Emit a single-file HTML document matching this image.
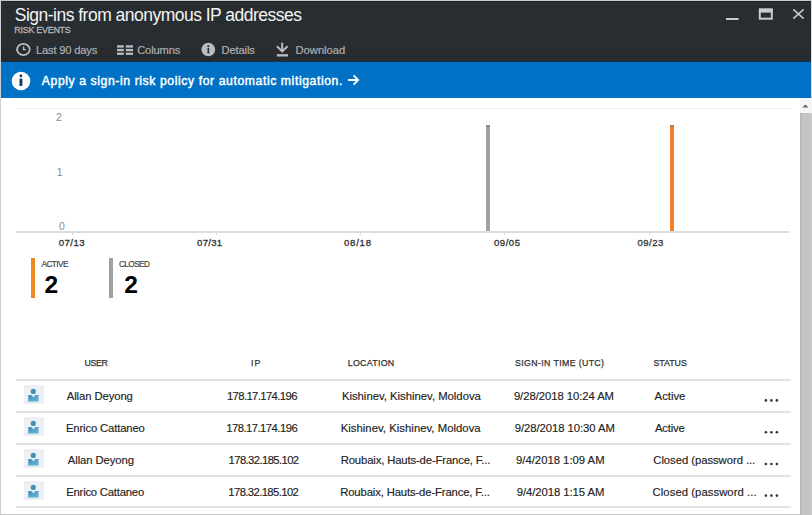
<!DOCTYPE html>
<html><head><meta charset="utf-8">
<style>
*{margin:0;padding:0;box-sizing:border-box}
html,body{width:812px;height:515px;overflow:hidden;background:#fff}
body{position:relative;font-family:"Liberation Sans",sans-serif;line-height:1}
.a{position:absolute;white-space:nowrap;line-height:1}
.s{position:absolute}
#frame{position:absolute;left:0;top:0;width:800px;height:515px;border-left:1px solid #cfcfcf;border-top:1px solid #c4c9cd;border-bottom:1.5px solid #c6c6c6}
.rl{position:absolute;left:16px;width:775px;height:2px;background:#e3e3e3}
.ui{position:absolute;left:24px;width:20px;height:19px;background:#eceff1}
.dot{position:absolute;width:3px;height:3px;border-radius:50%;background:#333}
</style></head><body>
<div class="s" style="left:0;top:0;width:812px;height:61px;background:#282d31"></div>
<div class="s" style="left:0;top:1px;width:812px;height:1px;background:#1f2427"></div>
<div class="s" style="left:0;top:4px;width:812px;height:1px;background:#2d3236"></div>
<div class="s" style="left:0;top:47px;width:812px;height:3px;background:#242c36"></div>
<div class="s" style="left:0;top:50px;width:812px;height:3.5px;background:#2d2a28"></div>
<div class="s" style="left:0;top:53.5px;width:812px;height:4px;background:#222c37"></div>
<div class="s" style="left:0;top:57.5px;width:812px;height:3px;background:#2a2a2b"></div>
<div class="s" style="left:0;top:60.5px;width:812px;height:1.5px;background:#0d3153"></div>
<div class="s" style="left:0;top:62px;width:812px;height:36px;background:#0072c6"></div>
<svg class="s" style="left:0;top:0" width="812" height="98" viewBox="0 0 812 98">
 <!-- window buttons -->
 <rect x="726" y="18" width="12.5" height="2" fill="#c9cbcd"/>
 <rect x="759.8" y="9.3" width="12" height="9.4" fill="none" stroke="#c9cbcd" stroke-width="2"/>
 <rect x="759" y="9" width="13.6" height="3.6" fill="#c9cbcd"/>
 <path d="M793.3 9.3 L803.6 18.6 M803.6 9.3 L793.3 18.6" stroke="#c2c4c7" stroke-width="1.7" fill="none"/>
 <!-- toolbar icons -->
 <ellipse cx="23.4" cy="49.45" rx="6.3" ry="5.6" stroke="#babdc0" stroke-width="1.7" fill="none"/>
 <path d="M23.6 46.4 V49.6 H25.8" stroke="#babdc0" stroke-width="1.4" fill="none"/>
 <path d="M15.8 49.2 L18.6 49.2 L17 51.2 Z" fill="#babdc0"/>
 <g fill="#babdc0">
  <rect x="117" y="45.3" width="6.8" height="2.3"/><rect x="117" y="48.9" width="6.8" height="2.3"/><rect x="117" y="52.6" width="6.8" height="2.3"/>
  <rect x="125.8" y="45.3" width="7.2" height="2.3"/><rect x="125.8" y="48.9" width="7.2" height="2.3"/><rect x="125.8" y="52.6" width="7.2" height="2.3"/>
 </g>
 <circle cx="208.3" cy="49.5" r="6.8" fill="#babdc0"/>
 <circle cx="208.3" cy="46.1" r="1.1" fill="#292e32"/>
 <rect x="207.5" y="47.9" width="1.7" height="5.6" fill="#292e32"/>
 <g stroke="#babdc0" fill="none" stroke-width="2">
  <path d="M282.2 42.7 V51"/>
  <path d="M276.9 46.3 L282.2 51.4 L287.6 46.3"/>
 </g>
 <rect x="276.8" y="54.2" width="11.2" height="2.3" fill="#babdc0"/>
 <!-- banner info -->
 <circle cx="21" cy="81" r="9.3" fill="#ffffff"/>
 <circle cx="20.9" cy="75.9" r="1.4" fill="#15385a"/>
 <rect x="19.5" y="78.6" width="2.9" height="7.3" fill="#15385a"/>
 <!-- arrow -->
 <path d="M348 80 H358 M353.6 75.4 L358.2 80 L353.6 84.6" stroke="#ffffff" stroke-width="1.8" fill="none"/>
</svg>
<!-- chart -->
<div class="s" style="left:16px;top:108px;width:775px;height:1px;background:#f8eee6"></div>
<div class="s" style="left:16px;top:231px;width:773px;height:2px;background:#dcdcdc"></div>
<div class="s" style="left:486px;top:124.5px;width:4px;height:106.5px;background:#a2a2a2"></div><div class="s" style="left:486px;top:124.5px;width:4px;height:2px;background:#8c8c8c"></div>
<div class="s" style="left:670px;top:124.5px;width:4px;height:106.5px;background:#f37f26"></div><div class="s" style="left:670px;top:124.5px;width:4px;height:2px;background:#d27240"></div>
<div class="s" style="left:72px;top:233px;width:1px;height:2px;background:#d6d6d6"></div><div class="s" style="left:216px;top:233px;width:1px;height:2px;background:#d6d6d6"></div><div class="s" style="left:360px;top:233px;width:1px;height:2px;background:#d6d6d6"></div><div class="s" style="left:504px;top:233px;width:1px;height:2px;background:#d6d6d6"></div><div class="s" style="left:649px;top:233px;width:1px;height:2px;background:#d6d6d6"></div>
<!-- legend -->
<div class="s" style="left:31px;top:258px;width:4px;height:40px;background:#f08c1e"></div>
<div class="s" style="left:109px;top:258px;width:4px;height:40px;background:#a0a0a0"></div>
<!-- table lines -->
<div class="rl" style="top:379px"></div>
<div class="rl" style="top:411px"></div>
<div class="rl" style="top:443px"></div>
<div class="rl" style="top:475px"></div>
<div class="rl" style="top:506px"></div>
<svg class="s" style="left:0;top:370px" width="812" height="145" viewBox="0 370 812 145">
 <defs><linearGradient id="ug" x1="0" y1="0" x2="1" y2="1"><stop offset="0" stop-color="#3f88b3"/><stop offset="1" stop-color="#6cc0e0"/></linearGradient></defs>
 <g transform="translate(0 385)">
   <rect x="24" y="0" width="20" height="19" fill="#ecf0f2"/>
   <circle cx="33.3" cy="6.4" r="2.6" fill="#4a8fb8"/>
   <path d="M28.3 10 H38.6 V16.6 H28.3 Z" fill="url(#ug)"/>
   <path d="M31.3 10 L33.4 12.4 L35.5 10 Z" fill="#cfe8f3"/>
 </g>
 <g transform="translate(0 417)">
   <rect x="24" y="0" width="20" height="19" fill="#ecf0f2"/>
   <circle cx="33.3" cy="6.4" r="2.6" fill="#4a8fb8"/>
   <path d="M28.3 10 H38.6 V16.6 H28.3 Z" fill="url(#ug)"/>
   <path d="M31.3 10 L33.4 12.4 L35.5 10 Z" fill="#cfe8f3"/>
 </g>
 <g transform="translate(0 449)">
   <rect x="24" y="0" width="20" height="19" fill="#ecf0f2"/>
   <circle cx="33.3" cy="6.4" r="2.6" fill="#4a8fb8"/>
   <path d="M28.3 10 H38.6 V16.6 H28.3 Z" fill="url(#ug)"/>
   <path d="M31.3 10 L33.4 12.4 L35.5 10 Z" fill="#cfe8f3"/>
 </g>
 <g transform="translate(0 481)">
   <rect x="24" y="0" width="20" height="19" fill="#ecf0f2"/>
   <circle cx="33.3" cy="6.4" r="2.6" fill="#4a8fb8"/>
   <path d="M28.3 10 H38.6 V16.6 H28.3 Z" fill="url(#ug)"/>
   <path d="M31.3 10 L33.4 12.4 L35.5 10 Z" fill="#cfe8f3"/>
 </g>
 <g fill="#333"><circle cx="765.9" cy="400.4" r="1.3"/><circle cx="771.4" cy="400.4" r="1.3"/><circle cx="776.9" cy="400.4" r="1.3"/></g>
 <g fill="#333"><circle cx="765.9" cy="432.2" r="1.3"/><circle cx="771.4" cy="432.2" r="1.3"/><circle cx="776.9" cy="432.2" r="1.3"/></g>
 <g fill="#333"><circle cx="765.9" cy="464" r="1.3"/><circle cx="771.4" cy="464" r="1.3"/><circle cx="776.9" cy="464" r="1.3"/></g>
 <g fill="#333"><circle cx="765.9" cy="495.6" r="1.3"/><circle cx="771.4" cy="495.6" r="1.3"/><circle cx="776.9" cy="495.6" r="1.3"/></g>
</svg>
<!-- scrollbar -->
<div class="s" style="left:800px;top:98px;width:12px;height:15px;background:#f6f6f6"></div>
<svg class="s" style="left:800px;top:98px" width="12" height="15"><path d="M2.2 9.6 L5.4 6.5 L8.6 9.6 Z" fill="#666"/></svg>
<div class="s" style="left:799.5px;top:113px;width:12.5px;height:402px;background:#c4c4c4"></div>
<div class="s" style="left:799.5px;top:113px;width:2px;height:402px;background:#b9b9b9"></div>
<div class="s" style="left:809.5px;top:113px;width:2.5px;height:402px;background:#cacaca"></div>
<div class="s" style="left:811px;top:0;width:1px;height:98px;background:#dcdfe2"></div>
<div class="s" style="left:800px;top:0;width:12px;height:1px;background:#c4c9cd"></div>

<div class="a" id="title" style="left:14.80px;top:7.09px;font-size:17.5px;color:#f4f4f4;letter-spacing:-0.514px;">Sign-ins from anonymous IP addresses</div>
<div class="a" id="risk" style="left:14.30px;top:26.18px;font-size:9px;color:#b2b4b6;letter-spacing:-0.300px;-webkit-text-stroke:0.3px #b2b4b6;">RISK EVENTS</div>
<div class="a" id="tb1" style="left:35.90px;top:45.42px;font-size:11.2px;color:#adafb1;letter-spacing:-0.182px;-webkit-text-stroke:0.2px #adafb1;">Last 90 days</div>
<div class="a" id="tb2" style="left:137.20px;top:45.42px;font-size:11.2px;color:#adafb1;letter-spacing:-0.167px;-webkit-text-stroke:0.2px #adafb1;">Columns</div>
<div class="a" id="tb3" style="left:221.60px;top:45.42px;font-size:11.2px;color:#adafb1;letter-spacing:-0.167px;-webkit-text-stroke:0.2px #adafb1;">Details</div>
<div class="a" id="tb4" style="left:295.50px;top:45.42px;font-size:11.2px;color:#adafb1;letter-spacing:-0.000px;-webkit-text-stroke:0.2px #adafb1;">Download</div>
<div class="a" id="ban" style="left:41.80px;top:74.57px;font-size:12.2px;color:#ffffff;letter-spacing:0.596px;-webkit-text-stroke:0.45px #fff;">Apply a sign-in risk policy for automatic mitigation.</div>
<div class="a" id="y2" style="left:56.00px;top:111.61px;font-size:10.5px;color:#8a8a8a;letter-spacing:0.000px;">2</div>
<div class="a" id="y1" style="left:56.70px;top:167.11px;font-size:10.5px;color:#8a8a8a;letter-spacing:0.000px;">1</div>
<div class="a" id="y0" style="left:59.10px;top:221.11px;font-size:10.5px;color:#8a8a8a;letter-spacing:0.000px;">0</div>
<div class="a" id="x0" style="left:58.70px;top:237.77px;font-size:9.6px;color:#333333;letter-spacing:0.500px;-webkit-text-stroke:0.3px #333333;">07/13</div>
<div class="a" id="x1" style="left:197.10px;top:237.77px;font-size:9.6px;color:#333333;letter-spacing:0.250px;-webkit-text-stroke:0.3px #333333;">07/31</div>
<div class="a" id="x2" style="left:344.00px;top:237.77px;font-size:9.6px;color:#333333;letter-spacing:0.750px;-webkit-text-stroke:0.3px #333333;">08/18</div>
<div class="a" id="x3" style="left:494.00px;top:237.77px;font-size:9.6px;color:#333333;letter-spacing:0.500px;-webkit-text-stroke:0.3px #333333;">09/05</div>
<div class="a" id="x4" style="left:637.40px;top:237.77px;font-size:9.6px;color:#333333;letter-spacing:0.500px;-webkit-text-stroke:0.3px #333333;">09/23</div>
<div class="a" id="lact" style="left:41.50px;top:259.67px;font-size:8.3px;color:#444444;letter-spacing:-0.600px;-webkit-text-stroke:0.2px #444444;">ACTIVE</div>
<div class="a" id="lclo" style="left:118.90px;top:259.67px;font-size:8.3px;color:#444444;letter-spacing:-0.600px;-webkit-text-stroke:0.2px #444444;">CLOSED</div>
<div class="a" id="n1" style="left:44.40px;top:272.98px;font-size:24.6px;font-weight:bold;color:#000000;letter-spacing:0.000px;">2</div>
<div class="a" id="n2" style="left:124.30px;top:272.98px;font-size:24.6px;font-weight:bold;color:#000000;letter-spacing:0.000px;">2</div>
<div class="a" id="h_USER" style="left:84.40px;top:358.75px;font-size:8.8px;color:#333333;letter-spacing:-0.333px;-webkit-text-stroke:0.25px #333333;">USER</div>
<div class="a" id="h_IP" style="left:251.10px;top:358.75px;font-size:8.8px;color:#333333;letter-spacing:1.000px;-webkit-text-stroke:0.25px #333333;">IP</div>
<div class="a" id="h_LOCATION" style="left:347.80px;top:358.75px;font-size:8.8px;color:#333333;letter-spacing:0.286px;-webkit-text-stroke:0.25px #333333;">LOCATION</div>
<div class="a" id="h_SIGNIN" style="left:515.10px;top:358.75px;font-size:8.8px;color:#333333;letter-spacing:0.353px;-webkit-text-stroke:0.25px #333333;">SIGN-IN TIME (UTC)</div>
<div class="a" id="h_STATUS" style="left:653.40px;top:358.75px;font-size:8.8px;color:#333333;letter-spacing:0.000px;-webkit-text-stroke:0.25px #333333;">STATUS</div>
<div class="a" id="r0c0" style="left:66.70px;top:390.93px;font-size:11.3px;color:#222222;letter-spacing:-0.091px;-webkit-text-stroke:0.15px #222222;">Allan Deyong</div>
<div class="a" id="r0c1" style="left:226.90px;top:390.93px;font-size:11.3px;color:#222222;letter-spacing:-0.615px;-webkit-text-stroke:0.15px #222222;">178.17.174.196</div>
<div class="a" id="r0c2" style="left:341.90px;top:390.93px;font-size:11.3px;color:#222222;letter-spacing:0.000px;-webkit-text-stroke:0.15px #222222;">Kishinev, Kishinev, Moldova</div>
<div class="a" id="r0c3" style="left:513.90px;top:390.93px;font-size:11.3px;color:#222222;letter-spacing:-0.059px;-webkit-text-stroke:0.15px #222222;">9/28/2018 10:24 AM</div>
<div class="a" id="r0c4" style="left:654.60px;top:390.93px;font-size:11.3px;color:#222222;letter-spacing:-0.000px;-webkit-text-stroke:0.15px #222222;">Active</div>
<div class="a" id="r1c0" style="left:65.90px;top:423.03px;font-size:11.3px;color:#222222;letter-spacing:-0.143px;-webkit-text-stroke:0.15px #222222;">Enrico Cattaneo</div>
<div class="a" id="r1c1" style="left:226.20px;top:423.03px;font-size:11.3px;color:#222222;letter-spacing:-0.538px;-webkit-text-stroke:0.15px #222222;">178.17.174.196</div>
<div class="a" id="r1c2" style="left:340.70px;top:423.03px;font-size:11.3px;color:#222222;letter-spacing:0.038px;-webkit-text-stroke:0.15px #222222;">Kishinev, Kishinev, Moldova</div>
<div class="a" id="r1c3" style="left:514.70px;top:423.03px;font-size:11.3px;color:#222222;letter-spacing:-0.059px;-webkit-text-stroke:0.15px #222222;">9/28/2018 10:30 AM</div>
<div class="a" id="r1c4" style="left:655.00px;top:423.03px;font-size:11.3px;color:#222222;letter-spacing:-0.200px;-webkit-text-stroke:0.15px #222222;">Active</div>
<div class="a" id="r2c0" style="left:67.80px;top:455.43px;font-size:11.3px;color:#222222;letter-spacing:-0.091px;-webkit-text-stroke:0.15px #222222;">Allan Deyong</div>
<div class="a" id="r2c1" style="left:228.60px;top:455.43px;font-size:11.3px;color:#222222;letter-spacing:-0.615px;-webkit-text-stroke:0.15px #222222;">178.32.185.102</div>
<div class="a" id="r2c2" style="left:340.70px;top:455.43px;font-size:11.3px;color:#222222;letter-spacing:-0.138px;-webkit-text-stroke:0.15px #222222;">Roubaix, Hauts-de-France, F...</div>
<div class="a" id="r2c3" style="left:516.00px;top:455.43px;font-size:11.3px;color:#222222;letter-spacing:0.000px;-webkit-text-stroke:0.15px #222222;">9/4/2018 1:09 AM</div>
<div class="a" id="r2c4" style="left:653.30px;top:455.43px;font-size:11.3px;color:#222222;letter-spacing:-0.053px;-webkit-text-stroke:0.15px #222222;">Closed (password ...</div>
<div class="a" id="r3c0" style="left:66.20px;top:487.03px;font-size:11.3px;color:#222222;letter-spacing:-0.214px;-webkit-text-stroke:0.15px #222222;">Enrico Cattaneo</div>
<div class="a" id="r3c1" style="left:228.30px;top:487.03px;font-size:11.3px;color:#222222;letter-spacing:-0.615px;-webkit-text-stroke:0.15px #222222;">178.32.185.102</div>
<div class="a" id="r3c2" style="left:340.20px;top:487.03px;font-size:11.3px;color:#222222;letter-spacing:-0.138px;-webkit-text-stroke:0.15px #222222;">Roubaix, Hauts-de-France, F...</div>
<div class="a" id="r3c3" style="left:516.80px;top:487.03px;font-size:11.3px;color:#222222;letter-spacing:-0.067px;-webkit-text-stroke:0.15px #222222;">9/4/2018 1:15 AM</div>
<div class="a" id="r3c4" style="left:652.60px;top:487.03px;font-size:11.3px;color:#222222;letter-spacing:0.053px;-webkit-text-stroke:0.15px #222222;">Closed (password ...</div>
<div id="frame"></div>
</body></html>
